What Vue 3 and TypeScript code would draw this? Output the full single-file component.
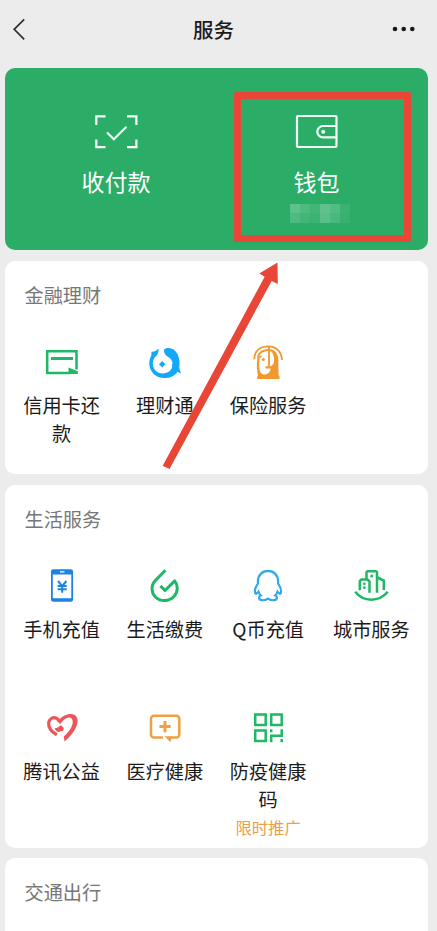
<script setup lang="ts">
interface Service {
  icon: string
  label: string
  note?: string
}
interface Section {
  title: string
  items: Service[]
}

const sections: Section[] = [
  {
    title: '金融理财',
    items: [
      { icon: 'card', label: '信用卡还款' },
      { icon: 'wealth', label: '理财通' },
      { icon: 'insurance', label: '保险服务' },
    ],
  },
  {
    title: '生活服务',
    items: [
      { icon: 'phone', label: '手机充值' },
      { icon: 'drop', label: '生活缴费' },
      { icon: 'penguin', label: 'Q币充值' },
      { icon: 'city', label: '城市服务' },
      { icon: 'heart', label: '腾讯公益' },
      { icon: 'medical', label: '医疗健康' },
      { icon: 'qr', label: '防疫健康码', note: '限时推广' },
    ],
  },
  { title: '交通出行', items: [] },
]

const mosaic: number[] = [0.24, 0.17, 0.1, 0.25, 0.19, 0.07, 0.16, 0.11, 0.08, 0.22, 0.15, 0.06]
</script>

<template>
  <main class="page">
    <header class="bar">
      <svg class="back" viewBox="0 0 14 24"><path d="M12.2 2.3 2.2 12.3l10 10" /></svg>
      <h1>服务</h1>
      <svg class="more" viewBox="0 0 24 6">
        <circle cx="3" cy="3" r="2.3" /><circle cx="11.7" cy="3" r="2.3" /><circle cx="20.3" cy="3" r="2.3" />
      </svg>
    </header>

    <section class="pay">
      <div class="pay-item">
        <svg viewBox="0 0 44 36">
          <path d="M2.300 11V2.300H11.500M33 2.300h9.400V11M42.400 25.500v7.700H33M11.500 33.200H2.300v-7.700" />
          <path d="m13 18.500 6.800 6.800L32.500 12.700" />
        </svg>
        <span>收付款</span>
      </div>
      <div class="pay-item">
        <svg viewBox="0 0 44 36">
          <rect x="2" y="2" width="39.500" height="31" rx="1" />
          <path d="M41.500 12H28a5.700 5.700 0 0 0 0 11.400h13.500" />
          <circle class="solid" cx="28.200" cy="17.700" r="2" />
        </svg>
        <span>钱包</span>
        <div class="mosaic">
          <i v-for="(alpha, n) in mosaic" :key="n" :style="{ opacity: alpha }"></i>
        </div>
      </div>
      <div class="highlight"></div>
    </section>

    <section v-for="section in sections" :key="section.title" class="panel">
      <h2>{{ section.title }}</h2>
      <div class="grid">
        <div v-for="item in section.items" :key="item.label" class="cell">
          <svg class="icon" :class="item.icon" viewBox="0 0 40 40">
            <template v-if="item.icon === 'card'">
              <path class="line" d="M27 31H5.200V9.200H34.500V27.500" />
              <path class="line thick" d="M9 16.500h22" />
              <path class="fill" d="m26.500 25.500 9.300 3.700V32H26.500z" />
            </template>
            <template v-else-if="item.icon === 'wealth'">
              <path class="fill" d="M6.500 9.800C9 10 11.500 8.800 13.300 6.500 14 9 13.200 11.500 11.500 13.800 8.500 16 7.600 19.500 7.900 22.500 8.500 28 12.500 31.500 17.500 31.500 23 31.500 27 28 27.200 24.300 26.700 23.300 27 22.300 27.700 21.600 27.300 18.500 25.500 16.300 23 14.800 20.300 13.300 18.800 11 19 7.500 23.500 4.300 29.500 6.500 32.500 12 34.500 16 35 21 34.200 25.500L36 31.500 32.500 29.700C29.500 34 24 36.500 18 36 10.500 35.500 4.500 29.500 4.300 22 4.200 18.500 4.800 16 6.300 13.500z" />
              <path class="fill" d="M17.2 18.800 18.600 20.900 20.700 22.300 18.600 23.700 17.2 25.800 15.800 23.700 13.700 22.300 15.800 20.900z" />
              <circle class="fill" cx="17.200" cy="22.300" r="2.200" />
            </template>
            <template v-else-if="item.icon === 'insurance'">
              <path class="line" d="M6.300 17.300C6.300 9 12 4.300 20.300 4.300S33.500 10 34 18" />
              <path class="line" d="M9.600 14.800C11.500 10.500 15.200 8 20.300 8c6.200 0 9.400 4.500 9.300 11" />
              <path class="fill" d="M23.500 9.500C28.500 11.500 30.500 15 30.300 21L30.600 33.500 31.500 34V37H9.300L9 35 10 33.800C8.700 28 8.600 22 9.400 16.500H11.600C10.800 22 11 27 12.500 30.300 15 34 20.500 33 22.200 28.500L22.500 26.500H17.500V24.300H22.500C25.500 23 26.500 20 26 16.500 25.700 13.500 25 11.500 23.500 9.500z" />
              <path class="line" d="M21 4.500V24.500M9.500 16.500l4-2.500" />
              <circle class="fill" cx="15.300" cy="17.500" r="1.500" />
            </template>
            <template v-else-if="item.icon === 'phone'">
              <path class="fill" fill-rule="evenodd" d="M11.300 3.300h17.500a2.300 2.300 0 0 1 2.300 2.300v27.800a2.300 2.300 0 0 1-2.300 2.300H11.300A2.300 2.300 0 0 1 9 33.400V5.600a2.300 2.300 0 0 1 2.300-2.300zM10.800 8.500v23.700h18.500V8.500zM18 5.200v1.300h4.500V5.200z" />
              <path class="line slim" d="m16 15 4.200 5.200 4.200-5.200M20.200 20v6.800M15.700 20h9M15.700 23.200h9" />
            </template>
            <template v-else-if="item.icon === 'drop'">
              <path class="line" d="M20.500 4.300 10.700 14.100C5.700 19.200 6 26.600 10.400 31c5 5 13.700 4.600 18.500-.5 4.500-4.800 4.200-11.300.8-15.600L20 24.500l-4.600-4.600" />
            </template>
            <template v-else-if="item.icon === 'penguin'">
              <path class="line" d="M20 4.900c-5.900 0-10.100 4.500-10.100 10.300v2.500c-2 2.700-3.400 6.200-2.800 9 .3 1.600 1.700 1.300 3.400-1 .4 1.400 1.200 2.800 2.300 3.800-2.500 1-2.500 4.500 1.200 4.700 2.600.2 4.600-.6 6-1.600 1.400 1 3.400 1.800 6 1.600 3.700-.2 3.700-3.700 1.200-4.700 1.100-1 1.900-2.400 2.300-3.800 1.700 2.300 3.100 2.600 3.400 1 .6-2.800-.8-6.300-2.800-9v-2.500C30.100 9.400 25.900 4.900 20 4.900z" />
            </template>
            <template v-else-if="item.icon === 'city'">
              <path class="line" d="M8.800 24.200V15l1.500-1.500h6.200l2 2v11.300M15.500 12.500V6.200l1-1H25l1 1v20.600M26.500 11.500l6.300 3v9.600" />
              <circle class="fill" cx="13.300" cy="17.800" r="1.400" /><circle class="fill" cx="13.300" cy="21.700" r="1.400" /><circle class="fill" cx="20.700" cy="10" r="1.500" />
              <path class="line" d="M4.200 25.800C12.300 36.300 28 36.300 36.800 25.800" />
            </template>
            <template v-else-if="item.icon === 'heart'">
              <path class="line heart-loop" d="M17.500 14C16 9.800 12.300 8.600 9.300 10.500c-3.500 2.300-3.300 7.500-.8 11 1.500 2.200 3.500 3.700 6.300 5.400" />
              <path class="fill" d="M16 13.200C19.500 8.500 24.500 6 29 6c5 0 7.500 4 6.400 9-1.400 6.500-6.700 13.500-12.900 18.500L21.800 28.500c4.500-4 7.500-8 8.600-12 1.100-4-.4-7-3.200-7-3.300 0-6.200 2.500-9.200 6.700z" />
              <path class="fill" d="M17.300 18.300c.6-1.300 3-1 3.100.5 1.600.5 1.700 2.200 1 3.300-.4 1-1.800 1.600-3 1.200-1.500 1.200-3.600.4-4.400-1.100-.9-.4-1.300-1.500-.7-2.200 1.500.2 2.800-.4 4-1.700z" />
            </template>
            <template v-else-if="item.icon === 'medical'">
              <path class="line" d="M18 29.400H9a3 3 0 0 1-3-3V10.700a3 3 0 0 1 3-3h22.300a3 3 0 0 1 3 3v15.700a3 3 0 0 1-3 3H25" />
              <path class="line thick" d="M20 13v11.200M14.400 18.600h11.200" />
              <path class="fill" d="M19.500 28.200h8l-2.300 5.800z" />
            </template>
            <template v-else>
              <path class="line" d="M7.200 6.500h10.500V17H7.200zM23.200 6.500h10.500V17H23.200zM7.200 22.500h10.500V33H7.200zM23.200 21.300v3M33.700 21.300v6.500H22M23.200 27.800v6.400M33.700 31v3.200" />
            </template>
          </svg>
          <span class="label">{{ item.label }}</span>
          <span v-if="item.note" class="note">{{ item.note }}</span>
        </div>
      </div>
    </section>

    <svg class="arrow" viewBox="0 0 116 208"><path d="M.7 203.700 102.700 14.700 97.300 11.500 115.500.5 115.800 22 109.700 19 7.500 207z" /></svg>
  </main>
</template>

<style>
body {
  margin: 0;
  background: #ececec;
}
</style>

<style scoped>
.page {
  position: relative;
  box-sizing: border-box;
  height: 931px;
  overflow: hidden;
  padding: 0 9px 0 5px;
  display: flex;
  flex-direction: column;
  background: #ececec;
  color: #1b1b1b;
  font-family: "Noto Sans CJK SC", sans-serif;
}
.bar {
  flex: none;
  height: 67.500px;
  box-sizing: border-box;
  padding: 0 8px 10.500px 7px;
  display: flex;
  align-items: center;
  justify-content: space-between;
}
h1 {
  margin: 0;
  font-size: 20.500px;
  font-weight: 500;
  line-height: 30px;
  padding-left: 9px;
}
.back {
  width: 14px;
  height: 24px;
  fill: none;
  stroke: #303030;
  stroke-width: 1.7;
}
.more {
  width: 24px;
  height: 6px;
  margin-right: 4px;
  fill: #181818;
}
.pay {
  position: relative;
  flex: none;
  height: 182.500px;
  display: grid;
  grid-template-columns: 222px 179px;
  border-radius: 10px;
  background: #2cad67;
  color: #fff;
}
.pay-item {
  display: flex;
  flex-direction: column;
  align-items: center;
  padding-top: 46px;
  font-size: 23px;
  line-height: 34px;
}
.pay-item svg {
  width: 44px;
  height: 36px;
  margin-bottom: 14.500px;
  fill: none;
  stroke: #f2fff6;
  stroke-width: 2.200;
}
.pay-item .solid {
  fill: #f2fff6;
  stroke: none;
}
.mosaic {
  display: grid;
  grid-template-columns: repeat(6, 10px);
  grid-auto-rows: 9.500px;
  margin: 5.500px 0 0 6px;
}
.mosaic i {
  background: #fff;
}
.highlight {
  position: absolute;
  left: 228.500px;
  top: 24px;
  width: 177px;
  height: 150px;
  box-sizing: border-box;
  border: 7.500px solid #e94637;
  border-radius: 2px;
}
.panel {
  flex: none;
  box-sizing: border-box;
  height: 213px;
  margin-top: 11px;
  padding: 20px 5px 0;
  border-radius: 10px;
  background: #fff;
}
.panel:nth-of-type(3) {
  height: 362.500px;
}
.panel:nth-of-type(4) {
  margin-top: 10px;
}
h2 {
  margin: 0 0 33px;
  padding-left: 14.500px;
  color: #777;
  font-size: 19.200px;
  font-weight: 400;
  line-height: 28px;
}
.grid {
  display: grid;
  grid-template-columns: repeat(4, 1fr);
  grid-auto-rows: 142px;
}
.cell {
  display: flex;
  flex-direction: column;
  align-items: center;
}
.icon {
  flex: none;
  width: 40px;
  height: 40px;
  margin-bottom: 9px;
  color: #1eb866;
}
.label {
  width: 80px;
  text-align: center;
  font-size: 19.200px;
  line-height: 28px;
}
.note {
  color: #ee9e45;
  font-size: 16.300px;
  line-height: 28px;
}
.line {
  fill: none;
  stroke: currentColor;
  stroke-width: 2.500;
}
.thick {
  stroke-width: 3;
}
.slim {
  stroke-width: 2;
}
.fill {
  fill: currentColor;
}
.wealth {
  color: #14a9f8;
}
.insurance {
  color: #f2982e;
}
.insurance .line {
  stroke-width: 1.800;
}
.phone {
  color: #1c83e2;
}
.drop .line {
  stroke-width: 3;
  stroke-linejoin: round;
}
.penguin {
  color: #30a9ec;
}
.penguin .line {
  stroke-width: 2.200;
}
.heart {
  color: #ee5559;
}
.heart-loop {
  stroke-width: 3.200;
}
.medical {
  color: #eea044;
}
.arrow {
  position: absolute;
  left: 162px;
  top: 262px;
  width: 116px;
  height: 208px;
  fill: #e94637;
}
</style>
